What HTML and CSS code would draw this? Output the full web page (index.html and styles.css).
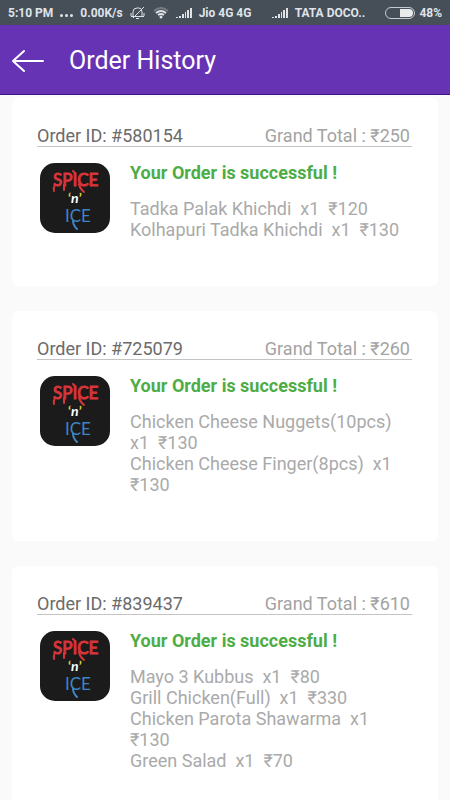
FILE: index.html
```html
<!DOCTYPE html>
<html lang="en">
<head>
	<meta charset="utf-8">
	<meta name="viewport" content="width=device-width, initial-scale=1">
	<title>Order History</title>
	<link rel="stylesheet" href="styles.css">
</head>
<body>
	<div class="status">
		<span>5:10 PM</span>
		<span class="dots"><i></i><i></i><i></i></span>
		<span>0.00K/s</span>
		<svg class="bell" viewBox="0 0 16 14">
			<path d="M1 10.500h13M3 10V6q0-4 4-4h2q3 0 3 4v4M6 12.500h3M1 7v3M14 7v3M14 1L3 12"/>
		</svg>
		<svg class="wifi" viewBox="0 0 16 12">
			<path d="M1 4q7-6 14 0" opacity=".3"/>
			<path d="M3 6q5-4 10 0M5 8q3-2 6 0"/>
			<circle cx="8" cy="10" r="1.500"/>
		</svg>
		<svg class="signal" viewBox="0 0 16 12">
			<path id="signal" d="M0 10h2v1H0zM3 9h2v2H3zM6 7h2v4H6zM9 5h1v6H9zM11 3h2v8h-2zM14 1h2v10h-2z"/>
		</svg>
		<span class="sim">Jio 4G 4G</span>
		<svg class="signal" viewBox="0 0 16 12"><use href="#signal"/></svg>
		<span class="sim">TATA DOCO..</span>
		<span class="power">
			<svg class="battery" viewBox="0 0 30 12">
				<rect x=".5" y=".5" width="29" height="11" rx="5.500"/>
				<path d="M15 2h9q4 0 4 4t-4 4h-9z"/>
			</svg>
			48%
		</span>
	</div>

	<header class="bar">
		<a class="back" href="#" aria-label="Back">
			<svg viewBox="0 0 32 24"><path d="M12 2L1 12l11 10M1 12h30"/></svg>
		</a>
		<h1>Order History</h1>
	</header>

	<main class="orders">
		<article class="card">
			<div class="card_top">
				<h2>Order ID: #580154</h2>
				<span class="total">Grand Total : ₹250</span>
			</div>
			<div class="card_body">
				<!-- the other cards reuse this logo -->
				<svg class="logo" viewBox="0 0 70 70" role="img" aria-label="Spice 'n' Ice">
					<g id="logo">
						<rect width="70" height="70" rx="15" fill="#1b1b1c"/>
						<text class="red" x="13" y="23">SPICE</text>
						<path class="red-tail" d="M15 22q-2 3-1 6M24 22v5M39 21q1 5 5 8M33 8l2 2"/>
						<text class="yellow" x="28" y="40">‘<tspan class="white">n</tspan>’</text>
						<text class="blue" x="25" y="59">ICE</text>
						<path class="blue-tail" d="M33 58q0 4 4 8"/>
					</g>
				</svg>
				<div class="content">
					<p class="msg">Your Order is successful !</p>
					<ul>
						<li>Tadka Palak Khichdi  x1  ₹120</li>
						<li>Kolhapuri Tadka Khichdi  x1  ₹130</li>
					</ul>
				</div>
			</div>
		</article>

		<article class="card">
			<div class="card_top">
				<h2>Order ID: #725079</h2>
				<span class="total">Grand Total : ₹260</span>
			</div>
			<div class="card_body">
				<svg class="logo" viewBox="0 0 70 70" role="img" aria-label="Spice 'n' Ice"><use href="#logo"/></svg>
				<div class="content">
					<p class="msg">Your Order is successful !</p>
					<ul>
						<li>Chicken Cheese Nuggets(10pcs)  x1  ₹130</li>
						<li>Chicken Cheese Finger(8pcs)  x1  ₹130</li>
					</ul>
				</div>
			</div>
		</article>

		<article class="card">
			<div class="card_top">
				<h2>Order ID: #839437</h2>
				<span class="total">Grand Total : ₹610</span>
			</div>
			<div class="card_body">
				<svg class="logo" viewBox="0 0 70 70" role="img" aria-label="Spice 'n' Ice"><use href="#logo"/></svg>
				<div class="content">
					<p class="msg">Your Order is successful !</p>
					<ul>
						<li>Mayo 3 Kubbus  x1  ₹80</li>
						<li>Grill Chicken(Full)  x1  ₹330</li>
						<li>Chicken Parota Shawarma  x1  ₹130</li>
						<li>Green Salad  x1  ₹70</li>
					</ul>
				</div>
			</div>
		</article>
	</main>
</body>
</html>
```
FILE: styles.css
```css
*{
	margin: 0;
	padding: 0;
	box-sizing: border-box;
}
body{
	background: #fafafa;
	font-family: Roboto, "Noto Sans", sans-serif;
}
svg{
	display: block;
	flex: none;
}

/* status bar */
.status{
	display: flex;
	align-items: center;
	gap: 7px;
	height: 25px;
	padding: 0 8px;
	background: #464e58;
	color: #dfe3e8;
	font-size: 12px;
	font-weight: 700;
	white-space: nowrap;
}
.dots{
	display: flex;
	gap: 2px;
	padding-top: 6px;
}
.dots i{
	width: 3px;
	height: 3px;
	border-radius: 50%;
	background: #dfe3e8;
}
.bell{
	width: 16px;
	height: 14px;
	fill: none;
	stroke: #dfe3e8;
}
.wifi{
	width: 16px;
	height: 12px;
	fill: none;
	stroke: #dfe3e8;
	stroke-width: 2;
}
.wifi circle{
	fill: #dfe3e8;
	stroke: none;
}
.signal{
	width: 16px;
	height: 12px;
	fill: #dfe3e8;
}
.sim{
	flex: 1 1 auto;
}
.power{
	display: flex;
	align-items: center;
	gap: 4px;
}
.battery{
	width: 30px;
	height: 12px;
}
.battery rect{
	fill: none;
	stroke: #c5cad0;
}
.battery path{
	fill: #e8eaec;
}

/* title bar */
.bar{
	display: flex;
	align-items: center;
	gap: 25px;
	height: 70px;
	padding: 2px 12px 0;
	background: #6633b5;
	border-bottom: 1px solid #3c1184;
	color: #fff;
}
.back svg{
	width: 32px;
	height: 24px;
	fill: none;
	stroke: #fff;
	stroke-width: 2;
	stroke-linecap: round;
	stroke-linejoin: round;
}
.bar h1{
	font-size: 25px;
	font-weight: 400;
}

/* order list */
.orders{
	display: flex;
	flex-direction: column;
	gap: 25px;
	padding: 3px 12px 25px;
}
.card{
	padding: 27px 26px 46px 25px;
	background: #fff;
	border-radius: 6px;
}
.card_top{
	display: flex;
	justify-content: space-between;
	padding-right: 2px;
	border-bottom: 1px solid #c4c4c4;
	line-height: 21px;
}
.card_top h2{
	color: #6b6b6b;
	font-size: 18px;
	font-weight: 400;
}
.total{
	color: #a3a3a3;
	font-size: 18px;
}
.card_body{
	display: flex;
	gap: 20px;
	padding: 16px 10px 0 3px;
}
.content{
	flex: 1;
}
.msg{
	color: #4eac45;
	font-size: 18px;
	font-weight: 700;
	line-height: 20px;
}
.content ul{
	margin-top: 15px;
	list-style: none;
}
.content li{
	color: #aaa;
	font-size: 18px;
	line-height: 21px;
	white-space: pre-wrap;
}

/* logo */
.logo{
	width: 70px;
	height: 70px;
	font-family: Lato, sans-serif;
}
.logo path{
	fill: none;
	stroke-width: 2;
	stroke-linecap: round;
}
.red{
	fill: #d8353a;
	stroke: #d8353a;
	font-size: 17px;
}
.red-tail{
	stroke: #d8353a;
}
.yellow{
	fill: #d9cf3a;
	font-size: 14px;
	font-weight: 700;
}
.white{
	fill: #fff;
	font-style: italic;
}
.blue{
	fill: #3c86c6;
	font-size: 17px;
}
.blue-tail{
	stroke: #3c86c6;
}
```
